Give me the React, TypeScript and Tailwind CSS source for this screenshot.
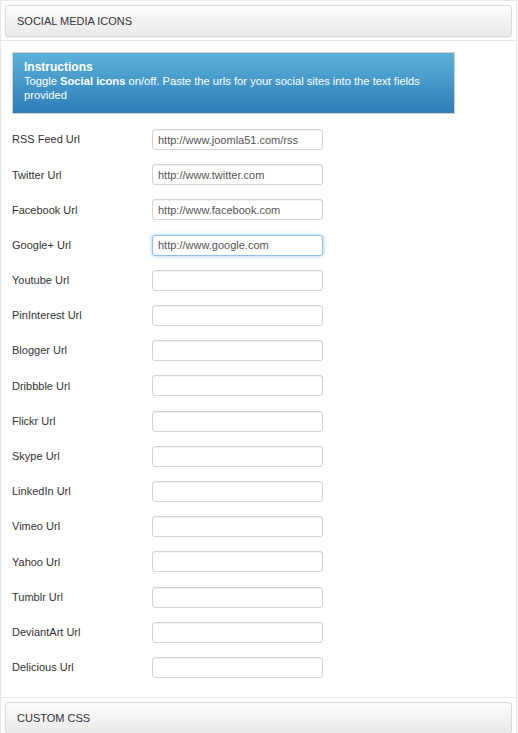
import React from 'react'

const fields: { label: string; value: string; focused?: boolean }[] = [
  { label: 'RSS Feed Url', value: 'http://www.joomla51.com/rss' },
  { label: 'Twitter Url', value: 'http://www.twitter.com' },
  { label: 'Facebook Url', value: 'http://www.facebook.com' },
  { label: 'Google+ Url', value: 'http://www.google.com', focused: true },
  { label: 'Youtube Url', value: '' },
  { label: 'PinInterest Url', value: '' },
  { label: 'Blogger Url', value: '' },
  { label: 'Dribbble Url', value: '' },
  { label: 'Flickr Url', value: '' },
  { label: 'Skype Url', value: '' },
  { label: 'LinkedIn Url', value: '' },
  { label: 'Vimeo Url', value: '' },
  { label: 'Yahoo Url', value: '' },
  { label: 'Tumblr Url', value: '' },
  { label: 'DeviantArt Url', value: '' },
  { label: 'Delicious Url', value: '' },
]

const SectionHeader: React.FC<{ title: string }> = ({ title }) => (
  <div className="px-[4px] pt-[4px] pb-[3px]">
    <div className="h-[32px] flex items-center pl-[11px] rounded-[3px] border border-[#d9d9d9] bg-gradient-to-b from-[#fcfcfc] to-[#e9e9e9] shadow-[0_1px_1px_rgba(0,0,0,0.08)] text-[11px] text-[#333]">
      {title}
    </div>
  </div>
)

export default function App() {
  return (
    <div className="w-[518px] h-[733px] overflow-hidden bg-white" style={{ fontFamily: '"Liberation Sans", Arial, sans-serif' }}>
      <div className="w-[517px] border border-[#e8e8e8] border-b-0">
        <SectionHeader title="SOCIAL MEDIA ICONS" />
        <div className="border-t border-[#e6e6e6] pt-[11px] pb-[12px]">
          <div className="ml-[11px] w-[443px] h-[62px] border border-[#cfd3cc] bg-gradient-to-b from-[#5db2da] to-[#2b7db6] px-[11px] pt-[7px] text-white leading-[14px]">
            <div className="font-bold text-[12px]">Instructions</div>
            <div className="text-[11.2px]">
              Toggle <span className="font-bold">Social icons</span> on/off. Paste the urls for your social sites into the text fields provided
            </div>
          </div>
          <div className="mt-[8px]">
            {fields.map((f) => (
              <div key={f.label} className="h-[35.2px] flex items-center">
                <label className="w-[151px] pl-[11px] text-[11px] text-[#333]">{f.label}</label>
                <input
                  readOnly
                  value={f.value}
                  className={`w-[171px] h-[21px] rounded-[3px] bg-white px-[5px] text-[11px] text-[#555] outline-none border ${
                    f.focused
                      ? 'border-[#8fc1ec] shadow-[0_0_4px_rgba(82,168,236,0.6)]'
                      : 'border-[#d4d4d4] shadow-[inset_0_1px_1px_rgba(0,0,0,0.06)]'
                  }`}
                />
              </div>
            ))}
          </div>
        </div>
      </div>
      <div className="w-[517px] border border-[#e8e8e8]">
        <SectionHeader title="CUSTOM CSS" />
      </div>
    </div>
  )
}
